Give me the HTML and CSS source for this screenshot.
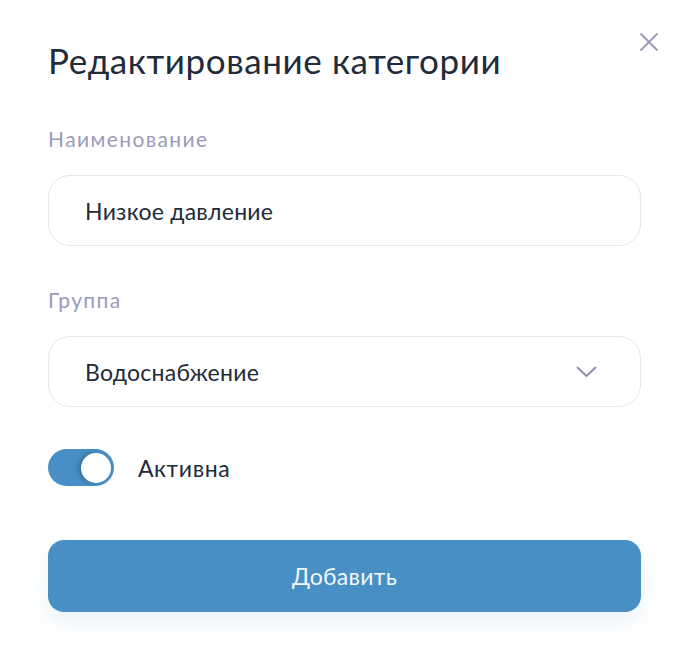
FILE: index.html
```html
<!DOCTYPE html>
<html lang="ru">
<head>
<meta charset="utf-8">
<title>Редактирование категории</title>
<link rel="stylesheet" href="styles.css">
</head>
<body>
<div class="modal">
  <button class="close" aria-label="Закрыть">
    <svg width="18" height="18" viewBox="0 0 18 18"><path d="M1 1L17 17M17 1L1 17" stroke="#9a98b8" stroke-width="1.8" stroke-linecap="round" fill="none"/></svg>
  </button>
  <h1 class="title">Редактирование категории</h1>

  <div class="field">
    <div class="label">Наименование</div>
    <div class="input">Низкое давление</div>
  </div>

  <div class="field field-group">
    <div class="label">Группа</div>
    <div class="input select">
      <span>Водоснабжение</span>
      <svg class="chevron" width="21" height="12" viewBox="0 0 21 12"><path d="M1.5 1.5L10.5 10L19.5 1.5" stroke="#8c89aa" stroke-width="1.8" stroke-linecap="round" stroke-linejoin="round" fill="none"/></svg>
    </div>
  </div>

  <div class="toggle-row">
    <div class="toggle"><div class="knob"></div></div>
    <span class="toggle-label">Активна</span>
  </div>

  <button class="submit">Добавить</button>
</div>
</body>
</html>
```

FILE: styles.css
```css
* { box-sizing: border-box; }
html, body { margin: 0; padding: 0; background: #ffffff; }
body { font-family: Lato, "Noto Sans", sans-serif; color: #222b3a; }

.modal {
  position: relative;
  width: 690px;
  height: 648px;
  padding: 40px 49px 0 48px;
  display: flex;
  flex-direction: column;
}

.close {
  position: absolute;
  top: 33px;
  right: 32px;
  width: 18px;
  height: 18px;
  padding: 0;
  border: 0;
  background: none;
  display: flex;
}

.title {
  margin: 0;
  font-size: 35px;
  line-height: 40px;
  font-weight: 400;
  color: #222b3a;
  letter-spacing: 0.6px;
}

.field { display: flex; flex-direction: column; margin-top: 47px; }
.field-group { margin-top: 42px; }

.label {
  font-size: 21px;
  line-height: 24px;
  color: #9c9abb;
  letter-spacing: 1.4px;
  margin-bottom: 24px;
}

.input {
  height: 71px;
  border: 1.5px solid #dde9ef;
  border-radius: 22px;
  padding: 0 36px;
  display: flex;
  align-items: center;
  font-size: 23px;
  letter-spacing: 0.25px;
  color: #222b3a;
}

.select { justify-content: space-between; padding-right: 43px; }
.chevron { display: block; }

.toggle-row {
  margin-top: 42px;
  display: flex;
  align-items: center;
  gap: 24px;
}

.toggle {
  width: 66px;
  height: 37px;
  border-radius: 19px;
  background: #478fc5;
  display: flex;
  align-items: center;
  justify-content: flex-end;
  padding-right: 3px;
}

.knob {
  width: 30px;
  height: 30px;
  border-radius: 50%;
  background: #ffffff;
  box-shadow: -3px 0 5px rgba(30, 60, 100, 0.35);
}

.toggle-label { font-size: 23px; letter-spacing: 0.6px; color: #222b3a; }

.submit {
  margin-top: 54px;
  height: 72px;
  border: 0;
  border-radius: 16px;
  background: #478fc5;
  color: #f4f8fb;
  font-family: Lato, "Noto Sans", sans-serif;
  font-size: 23px;
  letter-spacing: 0.3px;
  box-shadow: 0 10px 20px rgba(71, 143, 197, 0.12);
}
```
